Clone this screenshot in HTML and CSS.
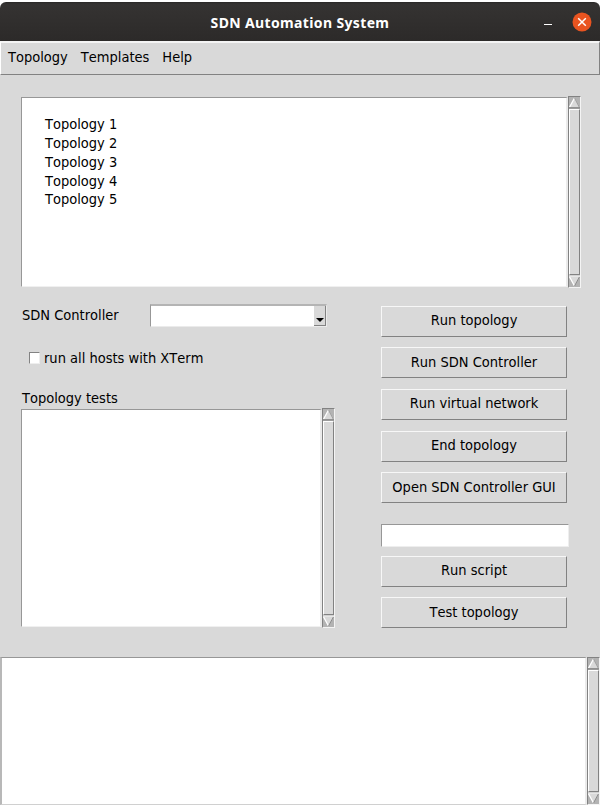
FILE: index.html
```html
<!DOCTYPE html>
<html lang="en">
<head>
<meta charset="utf-8">
<title>SDN Automation System</title>
<link rel="stylesheet" href="styles.css">
</head>
<body>
<svg class="symbols" aria-hidden="true">
  <symbol id="up" viewBox="0 0 12 12"><path d="M6 0 12 11H0Z" fill="#d9d9d9"/><path d="M.6 10.5 6 .5" stroke="#fff" stroke-width="1.3" fill="none"/><path d="M6 .5 11.2 10.5" stroke="#979797" fill="none"/><path d="M0 11.3H12" stroke="#828282" stroke-width="1.4"/></symbol>
  <symbol id="down" viewBox="0 0 12 12"><path d="M0 1H12L6 12Z" fill="#d9d9d9"/><path d="M.6 1.5 6 11.5" stroke="#fff" stroke-width="1.3" fill="none"/><path d="M11.4 1.5 6 11.5" stroke="#828282" fill="none"/><path d="M0 .7H12" stroke="#f0f0f0" stroke-width="1.4"/></symbol>
</svg>
<div class="window">
  <header class="titlebar">
    <h1 class="title">SDN Automation System</h1>
    <div class="controls">
      <svg class="minimize" viewBox="0 0 8 20"><path d="M0 12.5H8" stroke="#fff" stroke-width="1"/></svg>
      <svg class="close" viewBox="0 0 20 20"><circle cx="10" cy="10" r="9.5" fill="#e95420"/><path d="m6.2 6.2 7.6 7.6m0-7.6-7.6 7.6" stroke="#fff" stroke-width="1.5"/></svg>
    </div>
  </header>
  <nav class="menubar"><span>Topology</span><span>Templates</span><span>Help</span></nav>
  <main class="content">
    <section class="pane topologies">
      <ul class="box list"><li>Topology 1</li><li>Topology 2</li><li>Topology 3</li><li>Topology 4</li><li>Topology 5</li></ul>
      <div class="scrollbar"><svg><use href="#up"/></svg><div class="thumb"></div><svg><use href="#down"/></svg></div>
    </section>
    <div class="columns">
      <section class="left">
        <div class="field"><span>SDN Controller</span><div class="combo"><div class="drop"><svg viewBox="0 0 7 5"><path d="M0 0H7V1H6V2H5V3H4V4H3V3H2V2H1V1H0Z"/></svg></div></div></div>
        <div class="check"><span class="tick"></span><span>run all hosts with XTerm</span></div>
        <div class="label">Topology tests</div>
        <div class="pane tests">
          <div class="box"></div>
          <div class="scrollbar"><svg><use href="#up"/></svg><div class="thumb"></div><svg><use href="#down"/></svg></div>
        </div>
      </section>
      <section class="right">
        <button>Run topology</button>
        <button>Run SDN Controller</button>
        <button>Run virtual network</button>
        <button>End topology</button>
        <button>Open SDN Controller GUI</button>
        <div class="entry"></div>
        <button>Run script</button>
        <button>Test topology</button>
      </section>
    </div>
  </main>
  <section class="pane console">
    <div class="box"></div>
    <div class="scrollbar"><svg><use href="#up"/></svg><div class="thumb"></div><svg><use href="#down"/></svg></div>
  </section>
</div>
</body>
</html>
```
FILE: styles.css
```css
* { box-sizing: border-box; }
body { margin: 0; background: #fff; color: #000; font: 14.5px/19px "DejaVu Sans Condensed", "DejaVu Sans", sans-serif; font-stretch: condensed; font-kerning: none; letter-spacing: 0; overflow: hidden; }
.symbols { display: none; }
.window { width: 600px; height: 805px; padding-top: 2px; display: flex; flex-direction: column; }
.titlebar { height: 39px; border-radius: 6px 6px 0 0; background: linear-gradient(#282726 0, #353332 2px, #2c2a29 100%); display: grid; grid-template-columns: 1fr auto 1fr; align-items: center; }
.title { grid-column: 2; margin: 0; padding-top: 2px; color: #fff; font: bold 14px/20px "Noto Sans", sans-serif; letter-spacing: .36px; white-space: nowrap; }
.controls { display: flex; gap: 20px; justify-content: flex-end; padding-right: 8px; }
.minimize { width: 8px; height: 20px; }
.close { width: 20px; height: 20px; }
.menubar { height: 34px; flex: none; background: #d9d9d9; border: 1px solid #828282; border-top: 2px solid #f4f4f4; border-left-color: #fff; display: flex; gap: 13px; padding: 5px 7px; }
.content { height: 582px; flex: none; background: #d9d9d9; padding: 21px 19px 0 21px; }
.pane { display: flex; }
.box { flex: 1; margin: 1px 0 0; background: #fff; border: 1px solid #979797; border-right: 2px solid #ebebeb; border-bottom: 1px solid #f0f0f0; }
.list { list-style: none; padding: 17px 23px; line-height: 18.85px; }
.topologies { height: 192px; }
.topologies .box { margin-bottom: 1px; }
.scrollbar { width: 13px; background: #b3b3b3; border: 1px solid #828282; border-right-color: #f4f4f4; border-bottom-color: #f4f4f4; display: flex; flex-direction: column; }
.scrollbar svg { width: 11px; height: 12px; flex: none; display: block; }
.thumb { flex: 1; background: #d9d9d9; border: 1px solid #fff; border-right-color: #828282; border-bottom-color: #828282; }
.columns { display: flex; justify-content: space-between; padding-right: 12px; }
.left { width: 314px; padding-top: 16px; }
.field { display: flex; justify-content: space-between; align-items: center; height: 23px; padding: 0 8px 0 1px; }
.combo { width: 177px; height: 23px; background: #fff; border: 1px solid #979797; border-top: 2px solid #b4b4b4; border-right-color: #ebebeb; border-bottom-color: #ebebeb; display: flex; justify-content: flex-end; }
.drop { width: 12px; background: #d9d9d9; border-right: 1px solid #828282; border-bottom: 1px solid #828282; padding: 12px 0 0 2px; }
.drop svg { display: block; width: 8px; height: 5px; }
.check { display: flex; align-items: center; gap: 4px; margin: 21px 0 0 8px; height: 20px; }
.tick { width: 11px; height: 12px; background: #fff; border: 1px solid #828282; border-right-color: #eee; border-bottom-color: #eee; }
.label { margin: 21px 0 0 1px; height: 19px; }
.tests { height: 220px; }
.tests .box { margin-bottom: 1px; }
.right { width: 188px; padding-top: 17.5px; display: grid; grid-template-rows: repeat(5, 31px) 23px repeat(2, 31px); row-gap: 10.7px; align-content: start; }
.right button { width: 186px; padding: 0 0 1px 0; background: #d9d9d9; border: 1px solid #f7f7f7; border-right-color: #828282; border-bottom-color: #828282; color: #000; font: inherit; letter-spacing: inherit; font-kerning: none; }
.entry { margin: 10px 0 -10px; background: #fff; border: 1px solid #979797; border-right-color: #eee; border-bottom-color: #eee; }
.entry ~ button { margin: 8px 0 -8px; }
.console { flex: 1; background: #d9d9d9; }
.console .box { margin: 0; border-left: 2px solid #b8b8b8; border-bottom-color: #d0d0d0; }
```
